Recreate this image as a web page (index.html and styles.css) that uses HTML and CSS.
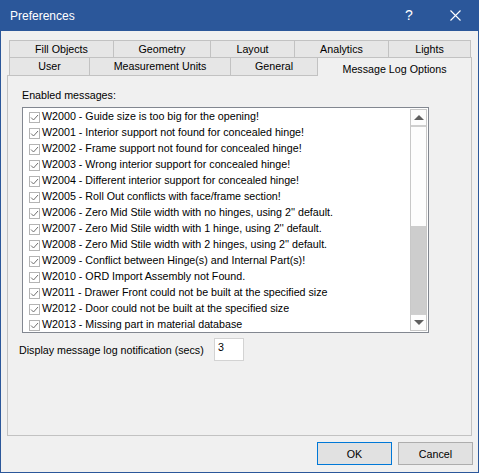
FILE: index.html
```html
<!DOCTYPE html>
<html>
<head>
<meta charset="utf-8">
<title>Preferences</title>
<link rel="stylesheet" href="styles.css">
</head>
<body>
<div class="window">
  <div class="titlebar">
    <span class="title">Preferences</span>
    <div class="tb-buttons">
      <span class="tb-btn help">?</span>
      <span class="tb-btn close"><svg width="11" height="11" viewBox="0 0 11 11"><path d="M0.5 0.5L10.5 10.5M10.5 0.5L0.5 10.5" stroke="#fff" stroke-width="1.1" fill="none"/></svg></span>
    </div>
  </div>
  <div class="content">
    <div class="tabs">
      <div class="tabrow row1">
        <div class="tab">Fill Objects</div>
        <div class="tab">Geometry</div>
        <div class="tab">Layout</div>
        <div class="tab">Analytics</div>
        <div class="tab last">Lights</div>
      </div>
      <div class="tabrow row2">
        <div class="tab">User</div>
        <div class="tab">Measurement Units</div>
        <div class="tab">General</div>
        <div class="tab last selected">Message Log Options</div>
      </div>
    </div>
    <div class="panel">
      <div class="label">Enabled messages:</div>
      <div class="listbox">
        <div class="items">
          <div class="item"><span class="cb"><svg width="9" height="9" viewBox="0 0 9 9"><path d="M1 4.5L3.5 7L8 2" stroke="#707070" stroke-width="1" fill="none"/></svg></span><span>W2000 - Guide size is too big for the opening!</span></div>
          <div class="item"><span class="cb"><svg width="9" height="9" viewBox="0 0 9 9"><path d="M1 4.5L3.5 7L8 2" stroke="#707070" stroke-width="1" fill="none"/></svg></span><span>W2001 - Interior support not found for concealed hinge!</span></div>
          <div class="item"><span class="cb"><svg width="9" height="9" viewBox="0 0 9 9"><path d="M1 4.5L3.5 7L8 2" stroke="#707070" stroke-width="1" fill="none"/></svg></span><span>W2002 - Frame support not found for concealed hinge!</span></div>
          <div class="item"><span class="cb"><svg width="9" height="9" viewBox="0 0 9 9"><path d="M1 4.5L3.5 7L8 2" stroke="#707070" stroke-width="1" fill="none"/></svg></span><span>W2003 - Wrong interior support for concealed hinge!</span></div>
          <div class="item"><span class="cb"><svg width="9" height="9" viewBox="0 0 9 9"><path d="M1 4.5L3.5 7L8 2" stroke="#707070" stroke-width="1" fill="none"/></svg></span><span>W2004 - Different interior support for concealed hinge!</span></div>
          <div class="item"><span class="cb"><svg width="9" height="9" viewBox="0 0 9 9"><path d="M1 4.5L3.5 7L8 2" stroke="#707070" stroke-width="1" fill="none"/></svg></span><span>W2005 - Roll Out conflicts with face/frame section!</span></div>
          <div class="item"><span class="cb"><svg width="9" height="9" viewBox="0 0 9 9"><path d="M1 4.5L3.5 7L8 2" stroke="#707070" stroke-width="1" fill="none"/></svg></span><span>W2006 - Zero Mid Stile width with no hinges, using 2'' default.</span></div>
          <div class="item"><span class="cb"><svg width="9" height="9" viewBox="0 0 9 9"><path d="M1 4.5L3.5 7L8 2" stroke="#707070" stroke-width="1" fill="none"/></svg></span><span>W2007 - Zero Mid Stile width with 1 hinge, using 2'' default.</span></div>
          <div class="item"><span class="cb"><svg width="9" height="9" viewBox="0 0 9 9"><path d="M1 4.5L3.5 7L8 2" stroke="#707070" stroke-width="1" fill="none"/></svg></span><span>W2008 - Zero Mid Stile width with 2 hinges, using 2'' default.</span></div>
          <div class="item"><span class="cb"><svg width="9" height="9" viewBox="0 0 9 9"><path d="M1 4.5L3.5 7L8 2" stroke="#707070" stroke-width="1" fill="none"/></svg></span><span>W2009 - Conflict between Hinge(s) and Internal Part(s)!</span></div>
          <div class="item"><span class="cb"><svg width="9" height="9" viewBox="0 0 9 9"><path d="M1 4.5L3.5 7L8 2" stroke="#707070" stroke-width="1" fill="none"/></svg></span><span>W2010 - ORD Import Assembly not Found.</span></div>
          <div class="item"><span class="cb"><svg width="9" height="9" viewBox="0 0 9 9"><path d="M1 4.5L3.5 7L8 2" stroke="#707070" stroke-width="1" fill="none"/></svg></span><span>W2011 - Drawer Front could not be built at the specified size</span></div>
          <div class="item"><span class="cb"><svg width="9" height="9" viewBox="0 0 9 9"><path d="M1 4.5L3.5 7L8 2" stroke="#707070" stroke-width="1" fill="none"/></svg></span><span>W2012 - Door could not be built at the specified size</span></div>
          <div class="item"><span class="cb"><svg width="9" height="9" viewBox="0 0 9 9"><path d="M1 4.5L3.5 7L8 2" stroke="#707070" stroke-width="1" fill="none"/></svg></span><span>W2013 - Missing part in material database</span></div>
        </div>
        <div class="scrollbar">
          <div class="sb-btn up"><span class="arrow-up"></span></div>
          <div class="sb-track"></div>
          <div class="sb-thumb"></div>
          <div class="sb-btn down"><span class="arrow-down"></span></div>
        </div>
      </div>
      <div class="notify">
        <span class="notify-label">Display message log notification (secs)</span>
        <div class="input">3</div>
      </div>
    </div>
    <div class="buttons">
      <div class="btn ok">OK</div>
      <div class="btn">Cancel</div>
    </div>
  </div>
</div>
</body>
</html>
```
FILE: styles.css
```css
html, body {
  margin: 0;
  padding: 0;
}
body {
  font-family: "Liberation Sans", Arial, sans-serif;
  font-size: 10.7px;
  color: #000;
  background: #f0f0f0;
}
.window {
  width: 479px;
  height: 473px;
  box-sizing: border-box;
  border: 1px solid #2b579a;
  border-top: 0;
  background: #f0f0f0;
  display: flex;
  flex-direction: column;
}
.titlebar {
  height: 31px;
  flex: none;
  background: #2b579a;
  color: #fff;
  display: flex;
  align-items: center;
  padding-left: 9px;
}
.title {
  font-family: "Liberation Sans", Arial, sans-serif;
  font-size: 12px;
}
.tb-buttons {
  margin-left: auto;
  display: flex;
  height: 31px;
}
.tb-btn {
  width: 46px;
  height: 31px;
  display: flex;
  align-items: center;
  justify-content: center;
}
.help {
  font-size: 14px;
  padding-bottom: 2px;
  box-sizing: border-box;
}
.content {
  flex: 1;
  display: flex;
  flex-direction: column;
  padding: 9px 5px 0 6px;
}
.tabs {
  margin-left: 2px;
}
.tabrow {
  display: grid;
}
.row1 {
  grid-template-columns: 104px 97px 84px 94px 83px;
  height: 17px;
}
.row2 {
  grid-template-columns: 80px 141px 87px 155px;
  height: 18px;
}
.tab {
  box-sizing: border-box;
  border-left: 1px solid #c2c2c2;
  border-top: 1px solid #c2c2c2;
  background: #e6e6e6;
  display: flex;
  align-items: center;
  justify-content: center;
  white-space: nowrap;
}
.tab.last {
  border-right: 1px solid #c2c2c2;
}
.row1 .tab {
  padding-bottom: 1px;
}
.row2 .tab {
  padding-bottom: 2px;
}
.tab.selected {
  background: #f0f0f0;
  height: 19px;
  padding-top: 4px;
  padding-bottom: 0;
  position: relative;
  z-index: 1;
}
.panel {
  box-sizing: border-box;
  width: 465px;
  height: 361px;
  border: 1px solid #c2c2c2;
  padding: 13px 0 0 14px;
}
.label {
  line-height: 13px;
}
.listbox {
  margin-top: 5px;
  width: 407px;
  height: 226px;
  box-sizing: border-box;
  border: 1px solid #828790;
  background: #fff;
  display: flex;
}
.items {
  flex: 1;
}
.item {
  height: 16px;
  display: flex;
  align-items: center;
  padding-left: 6px;
  white-space: nowrap;
}
.cb {
  width: 11px;
  height: 11px;
  box-sizing: border-box;
  border: 1px solid #b4b4b4;
  margin-right: 2px;
  margin-top: 2px;
  display: flex;
  align-items: center;
  justify-content: center;
  background: #fff;
}
.item span:last-child {
  line-height: 16px;
}
.scrollbar {
  width: 17px;
  margin: 1px 1px 1px 0;
  box-sizing: border-box;
  border: 1px solid #c8c8c8;
  display: flex;
  flex-direction: column;
  background: #fdfdfd;
}
.sb-btn {
  height: 15px;
  flex: none;
  display: flex;
  align-items: center;
  justify-content: center;
  background: #fdfdfd;
}
.sb-btn.up {
  border-bottom: 2px solid #cfcfcf;
}
.sb-btn.down {
  border-top: 1px solid #cfcfcf;
}
.sb-track {
  flex: 1;
}
.sb-thumb {
  height: 88px;
  flex: none;
  background: #cdcdcd;
}
.arrow-up {
  width: 0;
  height: 0;
  border-left: 5px solid transparent;
  border-right: 5px solid transparent;
  border-bottom: 5px solid #606060;
}
.arrow-down {
  width: 0;
  height: 0;
  border-left: 5px solid transparent;
  border-right: 5px solid transparent;
  border-top: 5px solid #606060;
}
.notify {
  margin-top: 5px;
  margin-left: -3px;
  display: grid;
  grid-template-columns: 195px 30px;
  align-items: center;
}
.input {
  box-sizing: border-box;
  height: 23px;
  border: 1px solid #d3d3d3;
  background: #fff;
  padding: 2px 3px;
  line-height: 13px;
}
.buttons {
  margin-top: 6px;
  display: flex;
  justify-content: flex-end;
  gap: 6px;
}
.btn {
  box-sizing: border-box;
  width: 75px;
  height: 23px;
  border: 1px solid #adadad;
  background: #e1e1e1;
  display: flex;
  align-items: center;
  justify-content: center;
}
.btn.ok {
  border-color: #0078d7;
}
```
